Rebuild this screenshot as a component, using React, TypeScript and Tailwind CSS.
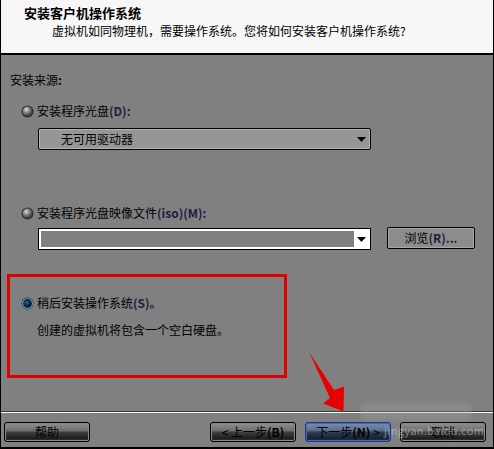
import React from "react";

const FONT = { fontFamily: '"Noto Sans CJK SC", "Noto Sans", sans-serif' };

function Radio({ selected }: { selected?: boolean }) {
  if (selected) {
    return (
      <svg width="13" height="13" viewBox="0 0 13 13" className="shrink-0">
        <defs>
          <radialGradient id="selg" cx="40%" cy="35%" r="60%">
            <stop offset="0%" stopColor="#2b5f9a" />
            <stop offset="100%" stopColor="#0a1626" />
          </radialGradient>
        </defs>
        <circle cx="6.5" cy="6.5" r="6" fill="#1a1a1a" />
        <circle cx="6.5" cy="6.5" r="5" fill="none" stroke="#4aa3c8" strokeWidth="1.2" />
        <circle cx="6.5" cy="6.5" r="3.6" fill="url(#selg)" />
      </svg>
    );
  }
  return (
    <svg width="13" height="13" viewBox="0 0 13 13" className="shrink-0">
      <defs>
        <radialGradient id="unselg" cx="38%" cy="32%" r="65%">
          <stop offset="0%" stopColor="#d8d8d8" />
          <stop offset="55%" stopColor="#7a7a7a" />
          <stop offset="100%" stopColor="#3a3a3a" />
        </radialGradient>
      </defs>
      <circle cx="6.5" cy="6.5" r="6" fill="#2a2a2a" />
      <circle cx="6.5" cy="6.5" r="5" fill="url(#unselg)" />
    </svg>
  );
}

function Caret() {
  return (
    <svg width="9" height="5" viewBox="0 0 9 5" className="shrink-0">
      <polygon points="0,0 9,0 4.5,5" fill="#000" />
    </svg>
  );
}

function FooterButton({
  children,
  primary,
  className,
}: {
  children: React.ReactNode;
  primary?: boolean;
  className?: string;
}) {
  return (
    <div
      className={
        "h-[20px] w-[86px] rounded-[3px] border flex items-center justify-center text-[12px] leading-none text-black " +
        (primary
          ? "border-[#1437a8] bg-[linear-gradient(to_bottom,#7c8ea6_0%,#5d7190_40%,#2d3d55_52%,#18222f_85%,#2a3444_100%)] shadow-[inset_0_0_0_1px_#4a6aa0] "
          : "border-black bg-[linear-gradient(to_bottom,#909090_0%,#6e6e6e_42%,#3e3e3e_52%,#1f1f1f_85%,#353535_100%)] shadow-[inset_0_0_0_1px_#8a8a8a] ") +
        (className ?? "")
      }
    >
      {children}
    </div>
  );
}

export default function App() {
  return (
    <div
      className="relative w-[494px] h-[449px] overflow-hidden bg-[#808080] border-x border-black flex flex-col text-black"
      style={FONT}
    >
      {/* Header */}
      <div className="h-[55px] shrink-0 bg-[#f7f7f7] border-b-2 border-black">
        <div className="pl-[23px] pt-[5px] text-[13px] leading-[16px] font-bold">
          安装客户机操作系统
        </div>
        <div className="pl-[51px] pt-[2px] text-[12px] leading-[16px]">
          虚拟机如同物理机，需要操作系统。您将如何安装客户机操作系统?
        </div>
      </div>

      {/* Body */}
      <div className="flex-1 flex flex-col text-[12px] leading-[16px]">
        <div className="mt-[17px] pl-[9px]">
          安装来源<span className="font-bold">:</span>
        </div>

        <div className="mt-[15px] pl-[20px] flex items-center gap-[3px] h-[16px]">
          <Radio />
          <span>
            安装程序光盘<span className="font-bold text-[#1b2040]">(D):</span>
          </span>
        </div>

        <div className="mt-[9px] ml-[37px] w-[333px] h-[22px] rounded-[2px] border border-black bg-[#969696] shadow-[inset_0_0_0_1px_#b4b4b4] flex items-center pl-[22px] pr-[4px]">
          <span className="flex-1">无可用驱动器</span>
          <Caret />
        </div>

        <div className="mt-[55px] pl-[20px] flex items-center gap-[3px] h-[16px]">
          <Radio />
          <span>
            安装程序光盘映像文件
            <span className="font-bold text-[#1b2040]">(iso)(M):</span>
          </span>
        </div>

        <div className="mt-[6px] flex items-start">
          <div className="mt-[1px] ml-[37px] w-[333px] h-[22px] border border-black bg-white p-[2px] flex items-stretch">
            <div className="flex-1 bg-[#808080]" />
            <div className="w-[14px] flex items-center justify-center">
              <Caret />
            </div>
          </div>
          <div className="ml-[16px] w-[88px] h-[22px] rounded-[2px] border border-black bg-[#8c8c8c] shadow-[inset_0_0_0_1px_#a8a8a8] flex items-center justify-center">
            浏览<span className="font-bold text-[#1b2040]">(R)...</span>
          </div>
        </div>

        {/* Red annotation box */}
        <div className="mt-[24px] ml-[6px] w-[280px] h-[104px] border-[3px] border-[#e00000]">
          <div className="mt-[18px] pl-[11px] flex items-center gap-[3px] h-[16px]">
            <Radio selected />
            <span>
              稍后安装操作系统<span className="font-bold text-[#1b2040]">(S)</span>。
            </span>
          </div>
          <div className="mt-[11px] pl-[27px]">创建的虚拟机将包含一个空白硬盘。</div>
        </div>
      </div>

      {/* Footer */}
      <div className="shrink-0">
        <div className="h-px bg-[#3a3a3a]" />
        <div className="h-px bg-white" />
        <div className="pt-[9px] pb-[5px] flex items-center text-[12px]">
          <FooterButton className="ml-[3px]">帮助</FooterButton>
          <div className="flex-1" />
          <FooterButton>
            &lt; 上一步<span className="font-bold">(B)</span>
          </FooterButton>
          <FooterButton primary className="ml-[9px]">
            下一步<span className="font-bold">(N)</span>&nbsp;&gt;
          </FooterButton>
          <FooterButton className="ml-[9px] mr-[7px]">取消</FooterButton>
        </div>
        <div className="h-[2px] bg-black" />
      </div>

      {/* Watermark */}
      <div className="absolute left-[360px] top-[404px] w-[110px] h-[16px] bg-[rgba(160,160,160,0.35)] blur-[2px] pointer-events-none" />
      <div className="absolute left-[383px] top-[423px] text-[11px] leading-[14px] text-[rgba(235,235,235,0.45)] pointer-events-none tracking-[0.3px]">
        jingyan.baidu.com
      </div>

      {/* Red arrow annotation */}
      <svg
        className="absolute left-0 top-0 pointer-events-none"
        width="494"
        height="449"
        viewBox="0 0 494 449"
      >
        <polygon
          points="308,352 333,390 343,386.5 342.5,411.5 322,403.5 329,398"
          fill="#e80000"
        />
      </svg>
    </div>
  );
}
